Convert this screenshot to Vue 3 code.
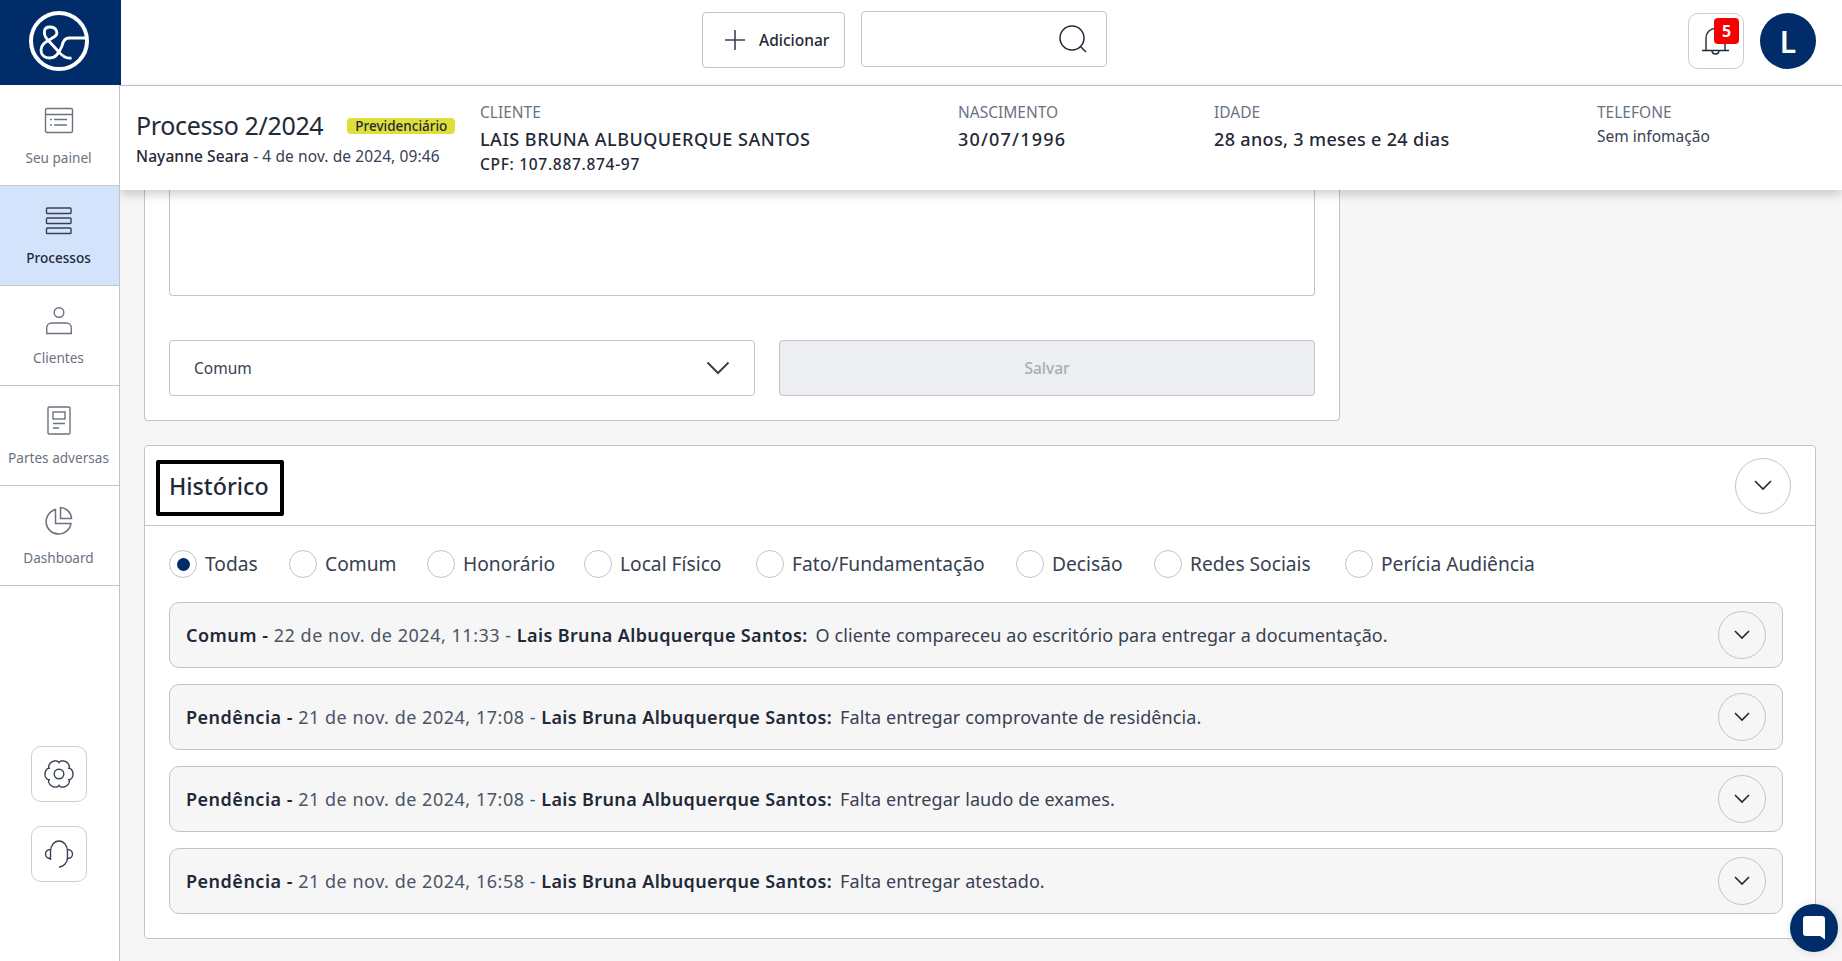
<script setup>
const sideItems = [
  { label: 'Seu painel', key: 'panel' },
  { label: 'Processos', key: 'proc', active: true },
  { label: 'Clientes', key: 'client' },
  { label: 'Partes adversas', key: 'adv' },
  { label: 'Dashboard', key: 'dash' },
]
const radios = [
  { label: 'Todas', on: true },
  { label: 'Comum' },
  { label: 'Honorário' },
  { label: 'Local Físico' },
  { label: 'Fato/Fundamentação' },
  { label: 'Decisão' },
  { label: 'Redes Sociais' },
  { label: 'Perícia Audiência' },
]
const rows = [
  { type: 'Comum', date: '22 de nov. de 2024, 11:33', text: 'O cliente compareceu ao escritório para entregar a documentação.' },
  { type: 'Pendência', date: '21 de nov. de 2024, 17:08', text: 'Falta entregar comprovante de residência.' },
  { type: 'Pendência', date: '21 de nov. de 2024, 17:08', text: 'Falta entregar laudo de exames.' },
  { type: 'Pendência', date: '21 de nov. de 2024, 16:58', text: 'Falta entregar atestado.' },
]
const gearPath = (() => {
  const pts = []
  for (let i = 0; i < 180; i++) {
    const t = (i / 180) * Math.PI * 2
    const r = 11.4 + 2.6 * Math.pow(Math.abs(Math.cos(3 * t)), 0.55)
    pts.push(`${(15 + r * Math.cos(t)).toFixed(2)} ${(15 + r * Math.sin(t)).toFixed(2)}`)
  }
  return 'M' + pts.join('L') + 'Z'
})()
</script>

<template>
  <div class="app">
    <aside class="side">
      <div class="logo">
        <svg width="62" height="62" viewBox="0 0 62 62" fill="none" stroke="#fff">
          <circle cx="31" cy="31" r="28" stroke-width="4" />
          <path d="M43.500 48C38 49 34 46 30 41L19 29C15 24 15 17 22 17C29 17 31 24 26 27C20 31 13 33 13 40C13 46 18 48 22 48C28 48 31 43 34 36C35 31 37 28 41 28H60" stroke-width="2.800" />
        </svg>
      </div>
      <nav class="nav">
        <div v-for="it in sideItems" :key="it.key" class="nav-item" :class="{ active: it.active }">
          <svg v-if="it.key === 'panel'" width="30" height="30" viewBox="0 0 30 30" fill="none" stroke="#6b7280" stroke-width="1.4">
            <rect x="1.500" y="2.500" width="27" height="24" rx="1.500" />
            <path d="M1.500 8.500h27M6 13.500h1.800M10 13.500h13M6 19h1.800M10 19h13" />
          </svg>
          <svg v-else-if="it.key === 'proc'" width="30" height="30" viewBox="0 0 30 30" fill="none" stroke="#374151" stroke-width="1.4">
            <rect x="2.500" y="2" width="24.500" height="5.500" rx=".8" />
            <rect x="2.500" y="12" width="24.500" height="5.500" rx=".8" />
            <rect x="2.500" y="22" width="24.500" height="5.500" rx=".8" />
          </svg>
          <svg v-else-if="it.key === 'client'" width="30" height="30" viewBox="0 0 30 30" fill="none" stroke="#6b7280" stroke-width="1.4">
            <circle cx="15" cy="6.500" r="4.800" />
            <path d="M2.700 27.500V22c0-3 2.400-5 5-5h14.600c2.600 0 5 2 5 5v5.500z" />
          </svg>
          <svg v-else-if="it.key === 'adv'" width="30" height="30" viewBox="0 0 30 30" fill="none" stroke="#6b7280" stroke-width="1.4">
            <rect x="4" y="1" width="22" height="27" rx="1.200" />
            <rect x="9" y="6" width="12" height="7" />
            <path d="M9 17.500h12M9 22h6" />
          </svg>
          <svg v-else width="30" height="30" viewBox="0 0 30 30" fill="none" stroke="#6b7280" stroke-width="1.500">
            <path d="M11.500 3.500A12.500 12.500 0 1 0 27 17.500H11.500z" />
            <path d="M16.500 1.500A11.500 11.500 0 0 1 27.500 12.500H16.500z" />
          </svg>
          <span>{{ it.label }}</span>
        </div>
      </nav>
      <div class="side-tools">
        <button class="tool">
          <svg width="30" height="30" viewBox="0 0 30 30" fill="none" stroke="#374151" stroke-width="1.400">
            <circle cx="15" cy="15" r="4.800" />
            <path :d="gearPath" />
          </svg>
        </button>
        <button class="tool">
          <svg width="30" height="30" viewBox="0 0 30 30" fill="none" stroke="#374151" stroke-width="1.400">
            <path d="M6.500 21V12.500C6.500 7 10 2 15 2s8.500 5 8.500 10.500v6c0 5-3.500 9-8.500 9.500" />
            <path d="M6.500 10.500C3.500 10.500 1.500 12.500 1.500 15s2 4.500 5 4.500M23.500 10.500c3 0 5 2 5 4.500s-2 4.500-5 4.500" />
          </svg>
        </button>
      </div>
    </aside>

    <div class="right">
      <header class="top">
        <button class="add">
          <svg width="22" height="22" viewBox="0 0 22 22" fill="none" stroke="#374151" stroke-width="1.600"><path d="M11 1v20M1 11h20" /></svg>
          <span>Adicionar</span>
        </button>
        <div class="search">
          <svg width="30" height="30" viewBox="0 0 30 30" fill="none" stroke="#1f2937" stroke-width="1.500">
            <circle cx="14" cy="14" r="12" />
            <path d="M22.500 22.500l5.500 5.500" />
          </svg>
        </div>
        <div class="top-right">
          <button class="bell">
            <svg width="30" height="30" viewBox="0 0 30 30" fill="none" stroke="#1f2937" stroke-width="1.400">
              <path d="M1 23.500h27M5 23.500V11c0-5.500 4-9.500 9.500-9.500S24 5.500 24 11v12.500M11 23.500c0 2 1.500 3.500 3.500 3.500s3.500-1.500 3.500-3.500" />
            </svg>
            <span class="count">5</span>
          </button>
          <div class="avatar">L</div>
        </div>
      </header>

      <section class="head">
        <div class="h-title">
          <div class="title-line">
            <h1>Processo 2/2024</h1>
            <span class="tag">Previdenciário</span>
          </div>
          <p class="by"><b>Nayanne Seara</b> - 4 de nov. de 2024, 09:46</p>
        </div>
        <div class="h-col c1">
          <small>CLIENTE</small>
          <strong class="name">LAIS BRUNA ALBUQUERQUE SANTOS</strong>
          <b class="cpf">CPF: 107.887.874-97</b>
        </div>
        <div class="h-col c2">
          <small>NASCIMENTO</small>
          <strong class="birth">30/07/1996</strong>
        </div>
        <div class="h-col c3">
          <small>IDADE</small>
          <strong class="age">28 anos, 3 meses e 24 dias</strong>
        </div>
        <div class="h-col c4">
          <small>TELEFONE</small>
          <span class="none">Sem infomação</span>
        </div>
      </section>

      <main class="main">
        <section class="card note">
          <div class="textarea"></div>
          <div class="form-row">
            <div class="select">
              <span>Comum</span>
              <svg width="24" height="14" viewBox="0 0 24 14" fill="none" stroke="#374151" stroke-width="2"><path d="M1.500 1.500L12 12 22.500 1.500" /></svg>
            </div>
            <button class="save">Salvar</button>
          </div>
        </section>

        <section class="card hist">
          <div class="hist-head">
            <h2>Histórico</h2>
            <button class="circle big">
              <svg width="18" height="11" viewBox="0 0 18 11" fill="none" stroke="#1f2937" stroke-width="1.600"><path d="M1 1l8 8 8-8" /></svg>
            </button>
          </div>
          <div class="hist-body">
            <div class="radios">
              <label v-for="r in radios" :key="r.label" class="radio">
                <i :class="{ on: r.on }"></i>
                <span>{{ r.label }}</span>
              </label>
            </div>
            <div class="rows">
              <article v-for="(r, i) in rows" :key="i" class="row">
                <p>
                  <b class="type">{{ r.type }} - </b><span class="date">{{ r.date }} - </span><b class="who">Lais Bruna Albuquerque Santos:</b>
                  <span class="msg">{{ r.text }}</span>
                </p>
                <button class="circle">
                  <svg width="16" height="10" viewBox="0 0 16 10" fill="none" stroke="#1f2937" stroke-width="1.600"><path d="M1 1l7 7 7-7" /></svg>
                </button>
              </article>
            </div>
          </div>
        </section>
      </main>
    </div>

    <button class="chat">
      <svg width="22" height="24" viewBox="0 0 22 24" fill="#fff"><path d="M3 0h16a3 3 0 0 1 3 3v20.500L17 20H3a3 3 0 0 1-3-3V3a3 3 0 0 1 3-3z" /></svg>
    </button>
  </div>
</template>

<style>
html, body { margin: 0; background: #f6f6f7; }
</style>

<style scoped>
* { box-sizing: border-box; }
.app {
  display: flex;
  height: 961px;
  width: 1842px;
  overflow: hidden;
  position: relative;
  font-family: "Noto Sans", "Open Sans", sans-serif;
  color: #1f2937;
  background: #f6f6f7;
}
button { font-family: inherit; background: #fff; padding: 0; cursor: pointer; }
p, h1, h2 { margin: 0; }

.side {
  width: 120px;
  flex: none;
  background: #fff;
  border-right: 1px solid #c1c4cd;
  display: flex;
  flex-direction: column;
  position: relative;
  z-index: 3;
}
.logo {
  width: 121px;
  height: 85px;
  background: #002c69;
  display: flex;
  align-items: center;
  justify-content: center;
  flex: none;
  margin-bottom: 1px;
  padding: 0 3px 3px 0;
}
.nav-item {
  height: 100px;
  border-bottom: 1px solid #c1c4cd;
  display: flex;
  flex-direction: column;
  align-items: center;
  padding: 20px 2px 0 0;
  gap: 12px;
  font-size: 13.600px;
  line-height: 20px;
  color: #6b7280;
}
.nav-item.active { background: #d3e3fc; color: #1f2937; font-weight: 500; }
.nav-item span { white-space: nowrap; }
.side-tools {
  margin-top: 160px;
  padding-right: 2px;
  display: flex;
  flex-direction: column;
  align-items: center;
  gap: 24px;
}
.tool {
  width: 56px;
  height: 56px;
  border: 1px solid #c9ced6;
  border-radius: 10px;
  display: flex;
  align-items: center;
  justify-content: center;
}

.right { flex: 1; min-width: 0; display: flex; flex-direction: column; }
.top {
  height: 86px;
  flex: none;
  background: #fff;
  border-bottom: 1px solid #c1c4cd;
  display: flex;
  align-items: center;
  padding: 0 0 5px 582px;
  position: relative;
  z-index: 2;
}
.add {
  width: 143px;
  height: 56px;
  border: 1px solid #c1c4cd;
  border-radius: 4px;
  display: flex;
  align-items: center;
  padding-left: 21px;
  gap: 13px;
  font-size: 15.500px;
  font-weight: 500;
  color: #1f2937;
}
.search {
  width: 246px;
  height: 56px;
  margin: -2px 0 0 16px;
  border: 1px solid #c1c4cd;
  border-radius: 4px;
  display: flex;
  align-items: center;
  justify-content: flex-end;
  padding-right: 18px;
}
.top-right { margin: 2px 26px 0 auto; display: flex; align-items: center; gap: 16px; }
.bell {
  width: 56px;
  height: 56px;
  border: 1px solid #c9ced6;
  border-radius: 10px;
  position: relative;
  display: flex;
  align-items: center;
  justify-content: center;
  padding-top: 1px;
}
.count {
  position: absolute;
  left: 25px;
  top: 4px;
  width: 25px;
  height: 26px;
  background: #f80000;
  color: #fff;
  border-radius: 4px;
  font-size: 16px;
  font-weight: 700;
  line-height: 26px;
  text-align: center;
}
.avatar {
  width: 56px;
  height: 56px;
  border-radius: 50%;
  background: #002c69;
  color: #fff;
  font-size: 30px;
  font-weight: 600;
  display: flex;
  align-items: center;
  justify-content: center;
}

.head {
  height: 104px;
  flex: none;
  background: #fff;
  display: flex;
  padding: 15px 0 0 16px;
  box-shadow: 0 4px 10px rgba(0, 0, 0, .2);
  position: relative;
  z-index: 2;
}
.h-title { width: 344px; flex: none; padding-top: 9px; }
.title-line { display: flex; align-items: center; gap: 24px; height: 30px; }
h1 { font-size: 25px; font-weight: 400; line-height: 30px; color: #1f2937; letter-spacing: -.35px; }
.tag {
  background: #dfdf3a;
  border-radius: 4px;
  height: 16px;
  width: 108px;
  margin-top: 2px;
  font-size: 13.500px;
  font-weight: 500;
  line-height: 16px;
  text-align: center;
  white-space: nowrap;
}
.by { margin-top: 5px; font-size: 15.500px; line-height: 22px; color: #374151; white-space: nowrap; letter-spacing: .1px; }
.by b { font-weight: 500; color: #1f2937; }
.h-col { display: flex; flex-direction: column; flex: none; white-space: nowrap; }
.h-col small { font-size: 15.500px; line-height: 22px; color: #6b7280; }
.h-col strong { font-size: 18px; font-weight: 500; line-height: 26px; margin-top: 3px; color: #1f2937; }
.name { letter-spacing: .5px; }
.birth { letter-spacing: 1.200px; }
.age { letter-spacing: .35px; }
.cpf { font-size: 15.500px; font-weight: 500; line-height: 22px; margin-top: 1px; color: #1f2937; letter-spacing: .7px; }
.none { font-size: 15.500px; line-height: 22px; margin-top: 2px; color: #374151; }
.c1 { width: 478px; }
.c2 { width: 256px; }
.c3 { width: 383px; }

.main { flex: 1; min-height: 0; padding: 0 26px 0 24px; }
.card { background: #fff; border: 1px solid #c1c4cd; border-radius: 4px; }
.note {
  width: 1196px;
  height: 231px;
  border-top: 0;
  border-top-left-radius: 0;
  border-top-right-radius: 0;
  padding: 0 24px;
}
.textarea {
  height: 106px;
  border: 1px solid #c1c4cd;
  border-top: 0;
  border-bottom-left-radius: 4px;
  border-bottom-right-radius: 4px;
}
.form-row { display: flex; gap: 24px; margin-top: 44px; }
.select {
  width: 586px;
  height: 56px;
  border: 1px solid #c1c4cd;
  border-radius: 4px;
  display: flex;
  align-items: center;
  justify-content: space-between;
  padding: 0 24px;
  font-size: 15.500px;
  color: #374151;
}
.save {
  flex: 1;
  height: 56px;
  border: 1px solid #c1c4cd;
  border-radius: 4px;
  background: #eceef0;
  color: #a8adb5;
  font-size: 15.500px;
  font-weight: 500;
}
.hist { margin-top: 24px; height: 494px; }
.hist-head {
  height: 80px;
  border-bottom: 1px solid #c1c4cd;
  display: flex;
  align-items: center;
  justify-content: space-between;
  padding: 0 24px 0 11px;
}
h2 {
  width: 128px;
  height: 56px;
  margin-top: 5px;
  border: 4px solid #000;
  border-radius: 2px;
  font-size: 23.200px;
  font-weight: 500;
  line-height: 44px;
  padding-left: 9px;
  white-space: nowrap;
  color: #1f2937;
}
.circle {
  width: 48px;
  height: 48px;
  border: 1px solid #c1c4cd;
  border-radius: 50%;
  background: transparent;
  display: flex;
  align-items: center;
  justify-content: center;
  flex: none;
}
.circle.big { width: 56px; height: 56px; background: #fff; }
.hist-body { padding: 24px 24px 0; }
.radios { display: flex; height: 28px; }
.radio { display: flex; align-items: center; gap: 8px; font-size: 19.200px; color: #374151; white-space: nowrap; }
.radio span { margin-top: -2px; }
.radio:nth-child(1) { width: 120px; }
.radio:nth-child(2) { width: 138px; }
.radio:nth-child(3) { width: 157px; }
.radio:nth-child(4) { width: 172px; }
.radio:nth-child(5) { width: 260px; }
.radio:nth-child(6) { width: 138px; }
.radio:nth-child(7) { width: 191px; }
.radio i {
  width: 28px;
  height: 28px;
  border-radius: 50%;
  border: 1px solid #c1c4cd;
  display: flex;
  align-items: center;
  justify-content: center;
  flex: none;
}
.radio i.on::after { content: ""; width: 13px; height: 13px; border-radius: 50%; background: #002c69; }
.rows { margin-top: 24px; display: flex; flex-direction: column; gap: 16px; }
.row {
  height: 66px;
  width: 1614px;
  border: 1px solid #c1c4cd;
  border-radius: 10px;
  background: #f6f6f7;
  display: flex;
  align-items: center;
  justify-content: space-between;
  padding: 0 16px;
}
.row p { font-size: 18px; white-space: nowrap; color: #1f2937; }
.row b { font-weight: 600; }
.type { letter-spacing: .5px; }
.who { letter-spacing: .37px; }
.date { color: #4b5563; letter-spacing: .52px; }
.msg { margin-left: 8px; color: #374151; letter-spacing: .1px; }
.chat {
  position: absolute;
  left: 1790px;
  top: 904px;
  width: 48px;
  height: 48px;
  border: 0;
  border-radius: 50%;
  background: #002c69;
  display: flex;
  align-items: center;
  justify-content: center;
  box-shadow: 0 0 8px rgba(0, 0, 0, .12);
  z-index: 5;
}
</style>
